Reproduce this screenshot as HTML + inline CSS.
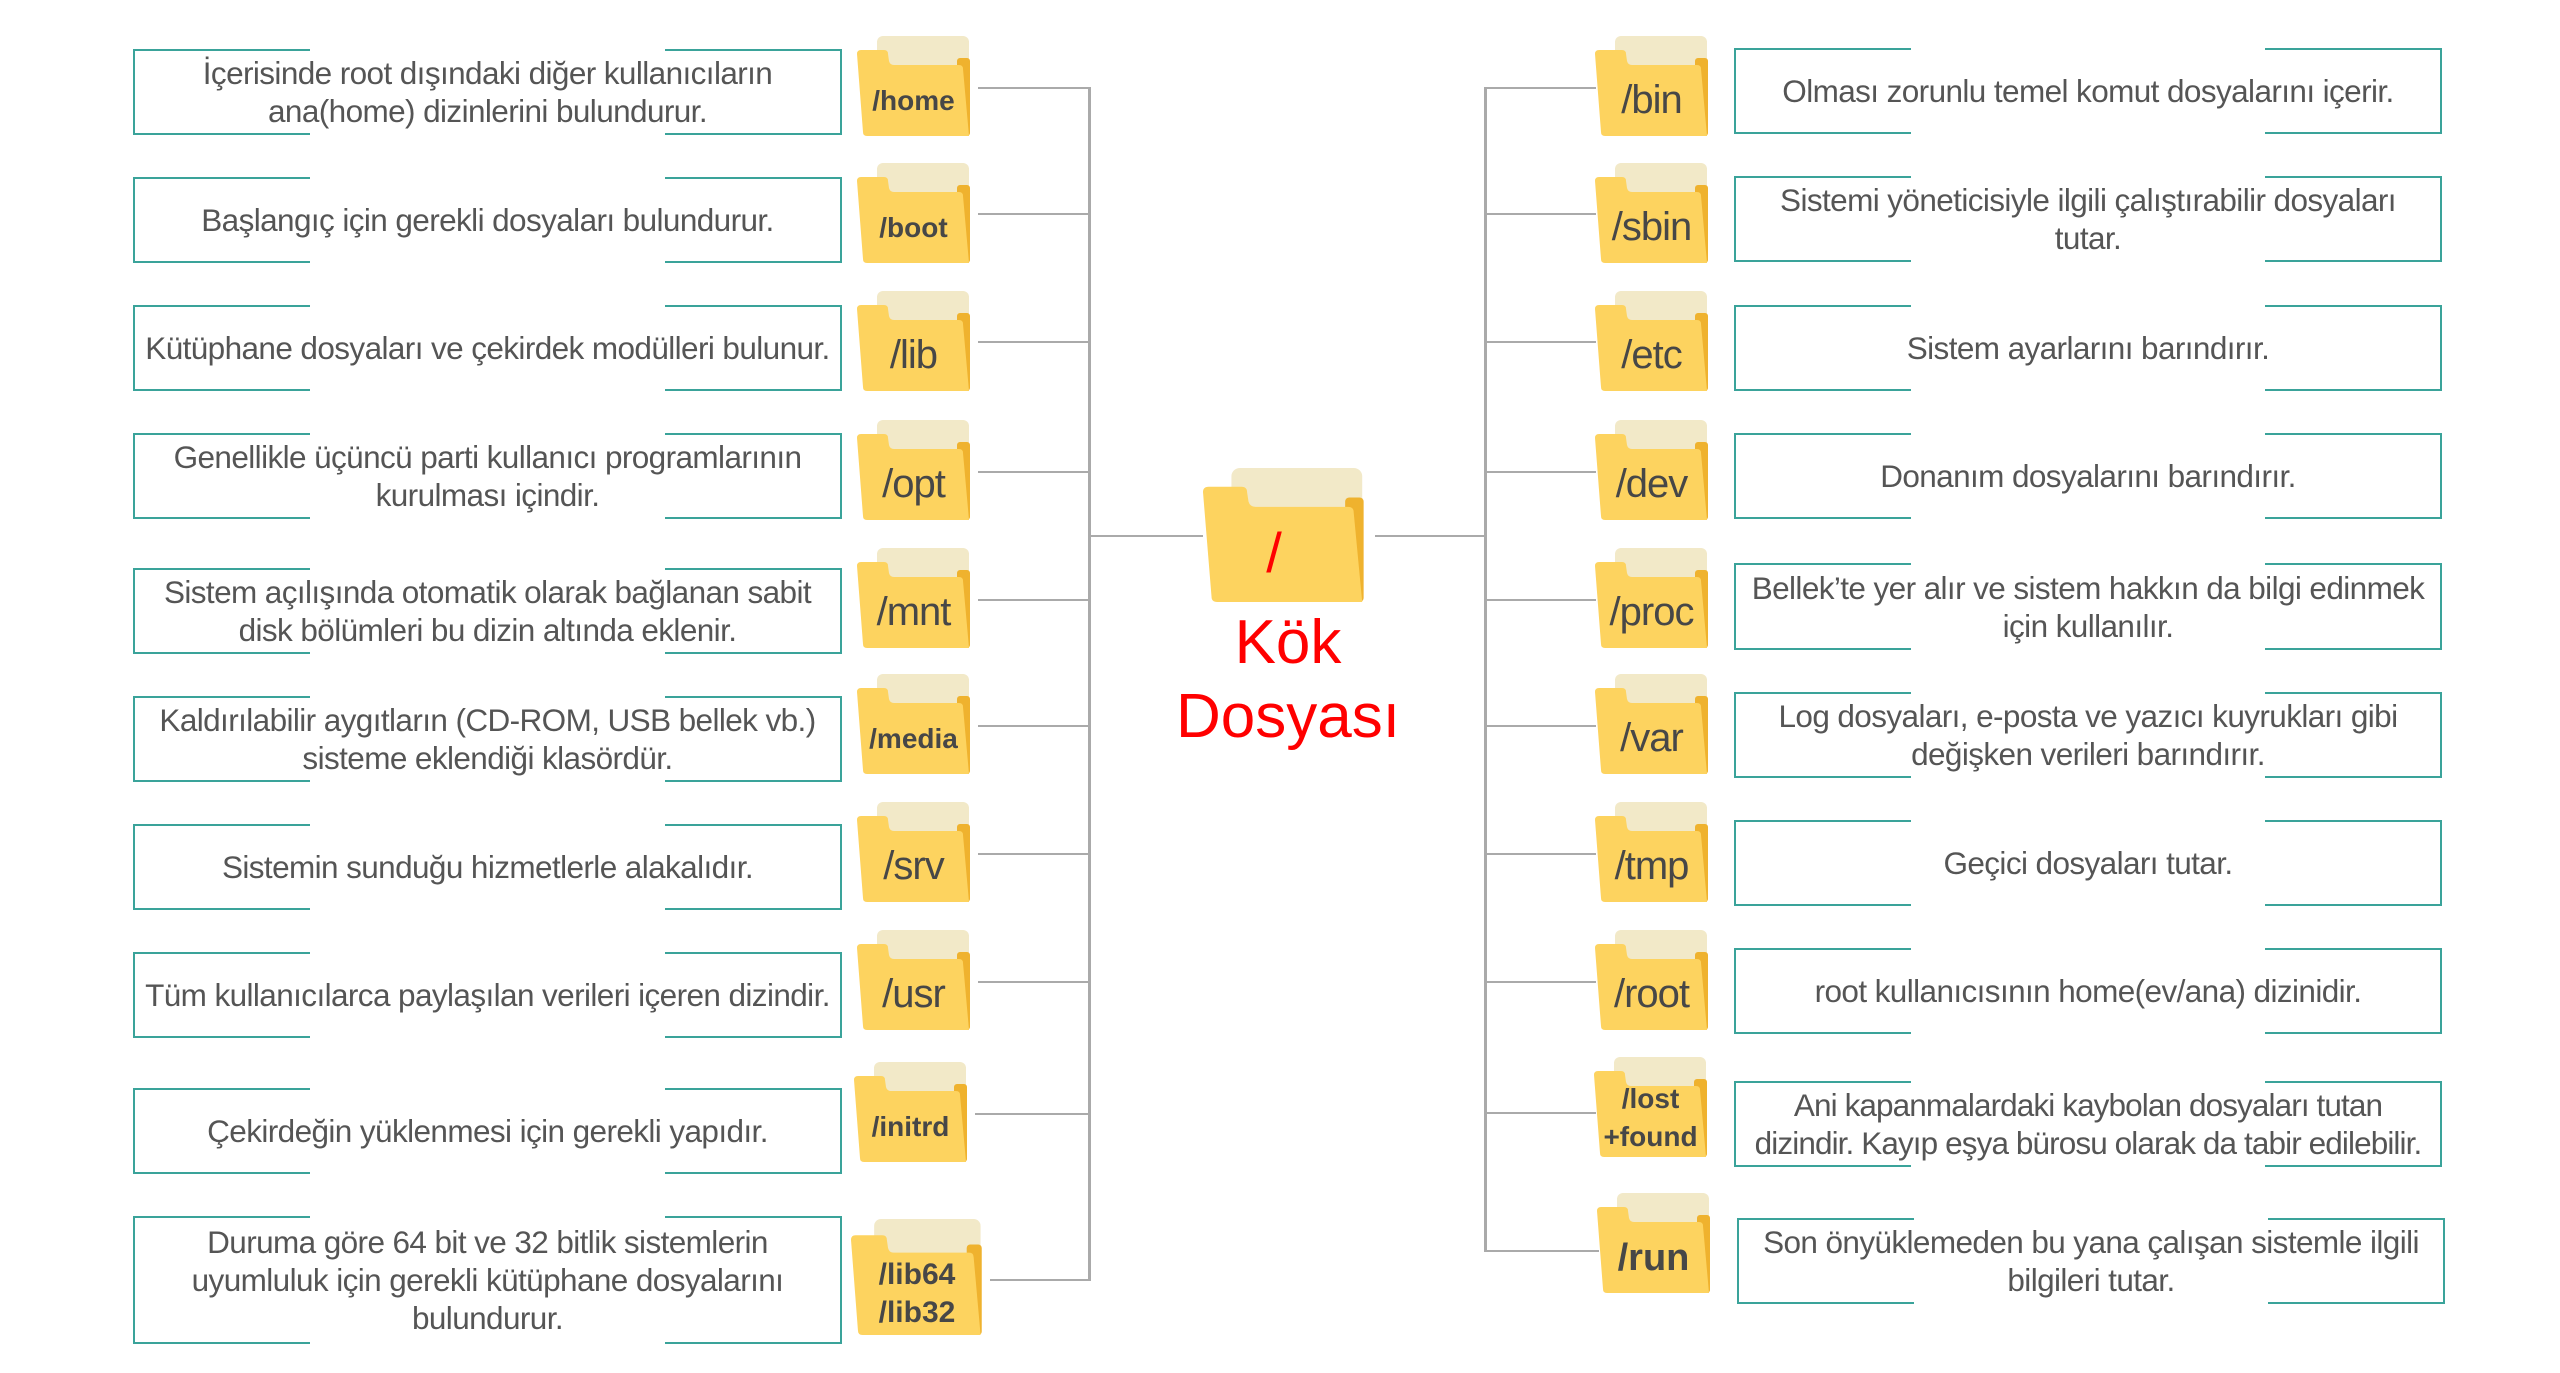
<!DOCTYPE html>
<html><head><meta charset="utf-8"><style>
body{margin:0;width:2560px;height:1373px;background:#fff;position:relative;overflow:hidden;font-family:"Liberation Sans",sans-serif}
.b{position:absolute;box-sizing:border-box;border-left:2px solid #3aa39a;border-right:2px solid #3aa39a;display:flex;align-items:center;justify-content:center;text-align:center;color:#555;font-size:31.5px;letter-spacing:-0.6px;line-height:38px;white-space:nowrap}
.b:before,.b:after{content:"";position:absolute;left:-2px;right:-2px;height:2px;background:linear-gradient(to right,#3aa39a 0 177px,transparent 177px calc(100% - 177px),#3aa39a calc(100% - 177px))}
.b:before{top:0}.b:after{bottom:0}
.f{position:absolute;width:121px;height:100px}
.f svg{position:absolute;left:0;top:0;width:100%;height:100%}
.f span{position:absolute;left:4px;right:12px;top:29px;bottom:0;display:flex;align-items:center;justify-content:center;text-align:center;color:#474747;white-space:nowrap}
.s{font-weight:bold;font-size:28px;line-height:36px}
.r{font-size:40px;letter-spacing:-1px}
.h{position:absolute;height:2px;background:#aaa}
.v{position:absolute;width:3px;background:#aaa}
</style></head><body>
<svg width="0" height="0" style="position:absolute"><defs><g id="fo">
<rect x="20" y="0" width="92" height="80" rx="6" fill="#f2e9c8"/>
<rect x="100" y="22" width="13" height="78" rx="3" fill="#efb22e"/>
<path d="M0 18Q0 14 4 14L27 14Q31 14 31 18L32 25Q33 29 37 29L102 29Q106 29 106 33L112 100L10 100Q6 100 6 96Z" fill="#fdd35f"/>
</g></defs></svg>

<div class="v" style="left:1088px;top:87px;height:1194px"></div>
<div class="h" style="left:978px;top:87px;width:111px"></div>
<div class="h" style="left:978px;top:213px;width:111px"></div>
<div class="h" style="left:978px;top:341px;width:111px"></div>
<div class="h" style="left:978px;top:471px;width:111px"></div>
<div class="h" style="left:978px;top:599px;width:111px"></div>
<div class="h" style="left:978px;top:725px;width:111px"></div>
<div class="h" style="left:978px;top:853px;width:111px"></div>
<div class="h" style="left:978px;top:981px;width:111px"></div>
<div class="h" style="left:975px;top:1113px;width:114px"></div>
<div class="h" style="left:990px;top:1279px;width:99px"></div>
<div class="h" style="left:1088px;top:535px;width:115px"></div>
<div class="h" style="left:1375px;top:535px;width:111px"></div>
<div class="v" style="left:1484px;top:87px;height:1164px"></div>
<div class="h" style="left:1484px;top:87px;width:112px"></div>
<div class="h" style="left:1484px;top:213px;width:112px"></div>
<div class="h" style="left:1484px;top:341px;width:112px"></div>
<div class="h" style="left:1484px;top:471px;width:112px"></div>
<div class="h" style="left:1484px;top:599px;width:112px"></div>
<div class="h" style="left:1484px;top:725px;width:112px"></div>
<div class="h" style="left:1484px;top:853px;width:112px"></div>
<div class="h" style="left:1484px;top:981px;width:112px"></div>
<div class="h" style="left:1484px;top:1112px;width:112px"></div>
<div class="h" style="left:1484px;top:1250px;width:115px"></div>

<div class="b" style="left:133px;top:49px;width:709px;height:86px">İçerisinde root dışındaki diğer kullanıcıların<br>ana(home) dizinlerini bulundurur.</div>
<div class="b" style="left:133px;top:177px;width:709px;height:86px">Başlangıç için gerekli dosyaları bulundurur.</div>
<div class="b" style="left:133px;top:305px;width:709px;height:86px">Kütüphane dosyaları ve çekirdek modülleri bulunur.</div>
<div class="b" style="left:133px;top:433px;width:709px;height:86px">Genellikle üçüncü parti kullanıcı programlarının<br>kurulması içindir.</div>
<div class="b" style="left:133px;top:568px;width:709px;height:86px">Sistem açılışında otomatik olarak bağlanan sabit<br>disk bölümleri bu dizin altında eklenir.</div>
<div class="b" style="left:133px;top:696px;width:709px;height:86px">Kaldırılabilir aygıtların (CD-ROM, USB bellek vb.)<br>sisteme eklendiği klasördür.</div>
<div class="b" style="left:133px;top:824px;width:709px;height:86px">Sistemin sunduğu hizmetlerle alakalıdır.</div>
<div class="b" style="left:133px;top:952px;width:709px;height:86px">Tüm kullanıcılarca paylaşılan verileri içeren dizindir.</div>
<div class="b" style="left:133px;top:1088px;width:709px;height:86px">Çekirdeğin yüklenmesi için gerekli yapıdır.</div>
<div class="b" style="left:133px;top:1216px;width:709px;height:128px">Duruma göre 64 bit ve 32 bitlik sistemlerin<br>uyumluluk için gerekli kütüphane dosyalarını<br>bulundurur.</div>

<div class="f" style="left:857px;top:36px"><svg viewBox="0 0 121 100" preserveAspectRatio="none"><use href="#fo"/></svg><span class="s">/home</span></div>
<div class="f" style="left:857px;top:163px"><svg viewBox="0 0 121 100" preserveAspectRatio="none"><use href="#fo"/></svg><span class="s">/boot</span></div>
<div class="f" style="left:857px;top:291px"><svg viewBox="0 0 121 100" preserveAspectRatio="none"><use href="#fo"/></svg><span class="r">/lib</span></div>
<div class="f" style="left:857px;top:420px"><svg viewBox="0 0 121 100" preserveAspectRatio="none"><use href="#fo"/></svg><span class="r">/opt</span></div>
<div class="f" style="left:857px;top:548px"><svg viewBox="0 0 121 100" preserveAspectRatio="none"><use href="#fo"/></svg><span class="r">/mnt</span></div>
<div class="f" style="left:857px;top:674px"><svg viewBox="0 0 121 100" preserveAspectRatio="none"><use href="#fo"/></svg><span class="s">/media</span></div>
<div class="f" style="left:857px;top:802px"><svg viewBox="0 0 121 100" preserveAspectRatio="none"><use href="#fo"/></svg><span class="r">/srv</span></div>
<div class="f" style="left:857px;top:930px"><svg viewBox="0 0 121 100" preserveAspectRatio="none"><use href="#fo"/></svg><span class="r">/usr</span></div>
<div class="f" style="left:854px;top:1062px"><svg viewBox="0 0 121 100" preserveAspectRatio="none"><use href="#fo"/></svg><span class="s">/initrd</span></div>
<div class="f" style="left:851px;top:1219px;width:140px;height:116px"><svg viewBox="0 0 121 100" preserveAspectRatio="none"><use href="#fo"/></svg><span class="s" style="top:34px;font-size:30px;line-height:38px">/lib64<br>/lib32</span></div>

<div class="f" style="left:1203px;top:468px;width:172px;height:134px"><svg viewBox="0 0 121 100" preserveAspectRatio="none"><use href="#fo"/></svg><span style="color:#f00;font-size:56px;top:34px;left:0;right:30px">/</span></div>
<div style="position:absolute;left:1138px;width:300px;top:606px;text-align:center;color:#f00;font-size:62px;line-height:74px">Kök<br>Dosyası</div>

<div class="f" style="left:1595px;top:36px"><svg viewBox="0 0 121 100" preserveAspectRatio="none"><use href="#fo"/></svg><span class="r">/bin</span></div>
<div class="f" style="left:1595px;top:163px"><svg viewBox="0 0 121 100" preserveAspectRatio="none"><use href="#fo"/></svg><span class="r">/sbin</span></div>
<div class="f" style="left:1595px;top:291px"><svg viewBox="0 0 121 100" preserveAspectRatio="none"><use href="#fo"/></svg><span class="r">/etc</span></div>
<div class="f" style="left:1595px;top:420px"><svg viewBox="0 0 121 100" preserveAspectRatio="none"><use href="#fo"/></svg><span class="r">/dev</span></div>
<div class="f" style="left:1595px;top:548px"><svg viewBox="0 0 121 100" preserveAspectRatio="none"><use href="#fo"/></svg><span class="r">/proc</span></div>
<div class="f" style="left:1595px;top:674px"><svg viewBox="0 0 121 100" preserveAspectRatio="none"><use href="#fo"/></svg><span class="r">/var</span></div>
<div class="f" style="left:1595px;top:802px"><svg viewBox="0 0 121 100" preserveAspectRatio="none"><use href="#fo"/></svg><span class="r">/tmp</span></div>
<div class="f" style="left:1595px;top:930px"><svg viewBox="0 0 121 100" preserveAspectRatio="none"><use href="#fo"/></svg><span class="r">/root</span></div>
<div class="f" style="left:1594px;top:1057px"><svg viewBox="0 0 121 100" preserveAspectRatio="none"><use href="#fo"/></svg><span class="s" style="top:22px;line-height:38px">/lost<br>+found</span></div>
<div class="f" style="left:1597px;top:1193px"><svg viewBox="0 0 121 100" preserveAspectRatio="none"><use href="#fo"/></svg><span class="s" style="font-size:38px">/run</span></div>

<div class="b" style="left:1734px;top:48px;width:708px;height:86px">Olması zorunlu temel komut dosyalarını içerir.</div>
<div class="b" style="left:1734px;top:176px;width:708px;height:86px">Sistemi yöneticisiyle ilgili çalıştırabilir dosyaları<br>tutar.</div>
<div class="b" style="left:1734px;top:305px;width:708px;height:86px">Sistem ayarlarını barındırır.</div>
<div class="b" style="left:1734px;top:433px;width:708px;height:86px">Donanım dosyalarını barındırır.</div>
<div class="b" style="left:1734px;top:563px;width:708px;height:87px">Bellek’te yer alır ve sistem hakkın da bilgi edinmek<br>için kullanılır.</div>
<div class="b" style="left:1734px;top:692px;width:708px;height:86px">Log dosyaları, e-posta ve yazıcı kuyrukları gibi<br>değişken verileri barındırır.</div>
<div class="b" style="left:1734px;top:820px;width:708px;height:86px">Geçici dosyaları tutar.</div>
<div class="b" style="left:1734px;top:948px;width:708px;height:86px">root kullanıcısının home(ev/ana) dizinidir.</div>
<div class="b" style="left:1734px;top:1081px;width:708px;height:86px;letter-spacing:-0.9px">Ani kapanmalardaki kaybolan dosyaları tutan<br>dizindir. Kayıp eşya bürosu olarak da tabir edilebilir.</div>
<div class="b" style="left:1737px;top:1218px;width:708px;height:86px">Son önyüklemeden bu yana çalışan sistemle ilgili<br>bilgileri tutar.</div>
</body></html>
